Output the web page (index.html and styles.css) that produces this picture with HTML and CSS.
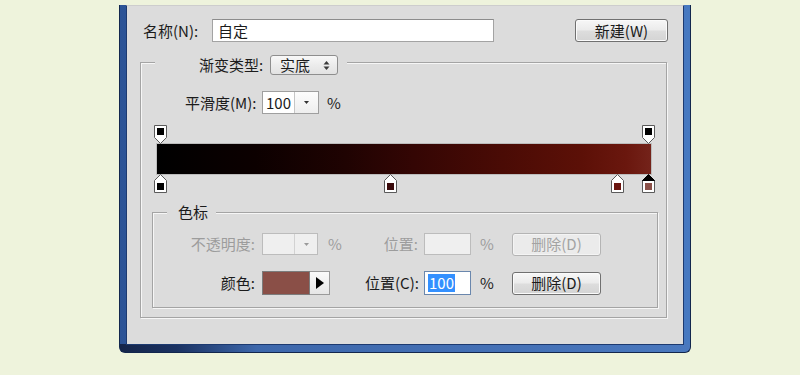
FILE: index.html
```html
<!DOCTYPE html>
<html lang="zh">
<head>
<meta charset="utf-8">
<title>渐变编辑器</title>
<link rel="stylesheet" href="styles.css">
</head>
<body>
<div class="dialog">
  <div class="panel">
    <div class="name-row">
      <span class="lbl name-lbl">名称(N):</span>
      <div class="textbox name-input">自定</div>
      <button class="btn new-btn">新建(W)</button>
    </div>

    <fieldset class="group outer">
      <legend class="type-legend">
        <div class="legend-inner">
          <span class="lbl type-lbl">渐变类型:</span>
          <span class="select">实底<svg class="updown" width="7" height="11" viewBox="0 0 7 11"><polygon points="0.5,4.5 3.5,1 6.5,4.5" fill="#3a3a3a"/><polygon points="0.5,6.5 3.5,10 6.5,6.5" fill="#3a3a3a"/></svg></span>
        </div>
      </legend>

      <div class="smooth-row">
        <span class="lbl smooth-lbl">平滑度(M):</span>
        <span class="combo smooth-combo"><span class="combo-val">100</span><span class="combo-btn"><svg width="5" height="3" viewBox="0 0 5 3"><polygon points="0,0 5,0 2.5,3" fill="#333"/></svg></span></span>
        <span class="pct">%</span>
      </div>

      <div class="editor">
        <div class="stops">
          <span class="stop" style="--p:0"><svg width="13" height="19" viewBox="0 0 13 19"><path d="M0.5 0.5H12.5V12.5L6.5 18.5L0.5 12.5Z" fill="#fff" stroke="#5a5a5a"/><rect x="3" y="3" width="7" height="7" fill="#000"/></svg></span>
          <span class="stop" style="--p:1"><svg width="13" height="19" viewBox="0 0 13 19"><path d="M0.5 0.5H12.5V12.5L6.5 18.5L0.5 12.5Z" fill="#fff" stroke="#5a5a5a"/><rect x="3" y="3" width="7" height="7" fill="#000"/></svg></span>
        </div>
        <div class="bar"></div>
        <div class="stops">
          <span class="stop" style="--p:0"><svg width="13" height="19" viewBox="0 0 13 19"><path d="M0.5 18.5V6.5L6.5 0.5L12.5 6.5V18.5Z" fill="#fff" stroke="#5a5a5a"/><rect x="3" y="9" width="7" height="7" fill="#000"/></svg></span>
          <span class="stop" style="--p:0.471"><svg width="13" height="19" viewBox="0 0 13 19"><path d="M0.5 18.5V6.5L6.5 0.5L12.5 6.5V18.5Z" fill="#fff" stroke="#5a5a5a"/><rect x="3" y="9" width="7" height="7" fill="#3a0a0b"/></svg></span>
          <span class="stop" style="--p:0.936"><svg width="13" height="19" viewBox="0 0 13 19"><path d="M0.5 18.5V6.5L6.5 0.5L12.5 6.5V18.5Z" fill="#fff" stroke="#5a5a5a"/><rect x="3" y="9" width="7" height="7" fill="#6a1510"/></svg></span>
          <span class="stop" style="--p:1"><svg width="13" height="19" viewBox="0 0 13 19"><path d="M0.5 18.5V6.5L6.5 0.5L12.5 6.5V18.5Z" fill="#fff" stroke="#5a5a5a"/><polygon points="0.5,6.5 6.5,0.5 12.5,6.5" fill="#000" stroke="#000"/><rect x="3" y="9" width="7" height="7" fill="#8b5048"/></svg></span>
        </div>
      </div>

      <fieldset class="group inner">
        <legend class="stop-legend">色标</legend>
        <div class="stop-grid">
          <span class="lbl right dis">不透明度:</span>
          <div class="cell2">
            <span class="combo opa-combo dis-box"><span class="combo-val"></span><span class="combo-btn"><svg width="5" height="3" viewBox="0 0 5 3"><polygon points="0,0 5,0 2.5,3" fill="#9a9a9a"/></svg></span></span>
            <span class="pct pct1 dis">%</span>
          </div>
          <span class="lbl right dis">位置:</span>
          <div class="cell4">
            <span class="textbox loc-input dis-box"></span>
            <span class="pct pct2 dis">%</span>
          </div>
          <button class="btn del-btn disabled">删除(D)</button>

          <span class="lbl right">颜色:</span>
          <div class="cell2">
            <span class="swatch"></span>
            <span class="swatch-btn"><svg width="8" height="12" viewBox="0 0 8 12"><polygon points="0,0 8,6 0,12" fill="#000"/></svg></span>
          </div>
          <span class="lbl right">位置(C):</span>
          <div class="cell4">
            <span class="textbox loc-input focus"><span class="sel">100</span></span>
            <span class="pct pct2">%</span>
          </div>
          <button class="btn del-btn">删除(D)</button>
        </div>
      </fieldset>
    </fieldset>
  </div>
</div>
</body>
</html>
```

FILE: styles.css
```css
* {
  box-sizing: border-box;
}

body {
  margin: 0;
  background: #eef3dc;
  font-family: "Noto Sans CJK SC", "Noto Sans", sans-serif;
  font-size: 15px;
  line-height: 18px;
  color: #1b1b1b;
}

.dialog {
  margin: 5px 0 0 119px;
  width: 572px;
  height: 348px;
  border: 1px solid #12264d;
  border-top: 0;
  border-radius: 0 0 6px 6px;
  padding: 0 6px 7px;
  background:
    linear-gradient(to right, #15254a 0, #1b3262 10%, #3d67ab 24%, #4a78be 100%) left bottom / 100% 8px no-repeat,
    linear-gradient(to right, #2c5396 0, #3b67ad 40%, #4779c1 100%);
}

.panel {
  height: 100%;
  background: #dcdcdc;
  border: 1px solid #1d3a70;
  border-top: 1px solid #cdcdcd;
}

.lbl {
  white-space: nowrap;
}

.right {
  text-align: right;
}

.dis {
  color: #9c9c9c;
}

/* name row */
.name-row {
  display: flex;
  align-items: center;
  height: 23px;
  margin-top: 13px;
  padding: 0 15px 0 16px;
}

.name-lbl {
  width: 69px;
}

.textbox {
  display: flex;
  align-items: center;
  height: 23px;
  border: 1px solid #a3a3a3;
  border-top-color: #8c8c8c;
  background: #fff;
  padding-left: 5px;
}

.name-input {
  width: 282px;
}

.btn {
  font-family: inherit;
  font-size: 15px;
  line-height: 18px;
  color: #1b1b1b;
  height: 23px;
  padding: 0;
  border: 1px solid #707070;
  border-radius: 3px;
  background: linear-gradient(#f7f7f7, #ebebeb 48%, #dddddd 52%, #d4d4d4);
  box-shadow: inset 0 0 0 1px #fbfbfb;
}

.new-btn {
  margin-left: auto;
  width: 93px;
}

/* group boxes */
fieldset.group {
  margin: 0;
  padding: 0;
  min-width: 0;
  border: 1px solid #a4a4a4;
  box-shadow: inset 1px 1px 0 #f6f6f6, 1px 1px 0 #f6f6f6;
}

fieldset.outer {
  margin: 7px 16px 0 13px;
  padding: 0 0 9px 0;
}

.type-legend {
  margin-left: 14px;
  padding: 6px 9px 0 44px;
  background: #dcdcdc;
}

.legend-inner {
  display: flex;
  align-items: center;
  gap: 5px;
  height: 20px;
}

.type-lbl {
  min-width: 66px;
}

.select {
  display: flex;
  align-items: center;
  justify-content: space-between;
  width: 68px;
  height: 20px;
  border: 1px solid #8e8e8e;
  border-radius: 3px;
  padding: 0 7px 0 9px;
  background: linear-gradient(#f8f8f8, #ececec 50%, #e2e2e2);
}

/* smoothness */
.smooth-row {
  display: flex;
  align-items: center;
  height: 23px;
  margin-top: 16px;
  padding-left: 44px;
}

.smooth-lbl {
  width: 77px;
}

.combo {
  display: flex;
  height: 23px;
  border: 1px solid #9f9f9f;
  background: #fff;
}

.smooth-combo {
  width: 57px;
}

.combo-val {
  width: 32px;
  padding-left: 3px;
  border-right: 1px solid #c6c6c6;
  display: flex;
  align-items: center;
}

.combo-btn {
  flex: 1;
  display: flex;
  align-items: center;
  justify-content: center;
  background: linear-gradient(#fdfdfd, #eeeeee);
}

.pct {
  margin-left: 8px;
}

/* gradient editor */
.editor {
  margin-top: 11px;
}

.stops {
  position: relative;
  height: 19px;
  margin-left: 13px;
  width: 501px;
}

.stop {
  position: absolute;
  top: 0;
  left: calc((100% - 13px) * var(--p));
  width: 13px;
  height: 19px;
}

.stop svg {
  display: block;
}

.bar {
  height: 30px;
  margin-left: 16px;
  width: 494px;
  background: linear-gradient(to right, #000 0%, #0c0000 20%, #1f0302 38%, #340604 52%, #4a0b05 70%, #5c1007 86%, #6a170e 95%, #74231a 100%);
  box-shadow: 0 0 0 1px rgba(90, 90, 90, 0.25);
}

/* color stop group */
fieldset.inner {
  margin: 10px 8px 0 11px;
  padding: 11px 0 12px 12px;
}

.stop-legend {
  margin-left: 2px;
  padding: 0 8px 0 11px;
  line-height: 18px;
  background: #dcdcdc;
}

.stop-grid {
  display: grid;
  grid-template-columns: 90px 110px 53px 94px 89px;
  grid-template-rows: 24px 24px;
  row-gap: 15px;
  align-items: center;
}

.cell2 {
  display: flex;
  align-items: center;
  padding-left: 7px;
}

.cell4 {
  display: flex;
  align-items: center;
  padding-left: 6px;
}

.opa-combo {
  width: 56px;
  height: 22px;
}

.dis-box {
  background: #efefef;
  border-color: #bcbcbc;
}

.dis-box .combo-val {
  border-right-color: #d2d2d2;
}

.dis-box .combo-btn {
  background: #efefef;
}

.pct1 {
  margin-left: 10px;
}

.pct2 {
  margin-left: 9px;
}

.loc-input {
  width: 47px;
  height: 22px;
  padding-left: 3px;
}

.loc-input.focus {
  height: 24px;
  border-color: #6a87ad;
}

.sel {
  background: #3390ff;
  color: #fff;
  padding: 0 1px;
  line-height: 18px;
}

.del-btn {
  width: 89px;
  height: 23px;
}

.btn.disabled {
  color: #a3a3a3;
  border-color: #b4b4b4;
  background: #ebebeb;
  box-shadow: inset 0 0 0 1px #f4f4f4;
}

.swatch {
  width: 48px;
  height: 24px;
  background: #8a4f47;
  border: 1px solid #7c7c7c;
}

.swatch-btn {
  width: 20px;
  height: 24px;
  display: flex;
  align-items: center;
  justify-content: center;
  border: 1px solid #9a9a9a;
  border-left: 0;
  background: linear-gradient(#fafafa, #e6e6e6);
}
```
